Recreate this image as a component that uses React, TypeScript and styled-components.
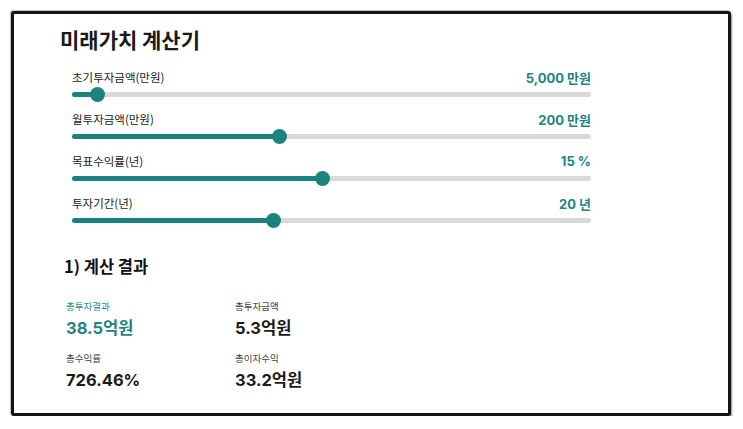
import React from "react";
import styled, { createGlobalStyle } from "styled-components";

const Global = createGlobalStyle`
  html, body { margin: 0; padding: 0; background: #fff; }
  body { font-family: "Inter", "Noto Sans CJK KR", sans-serif; color: #1a1a1a; }
`;

const Frame = styled.div`
  box-sizing: border-box;
  margin: 11px 0 0 11px;
  width: 720px;
  height: 405px;
  border: 3px solid #141414;
  border-radius: 3px;
  box-shadow: 1px 2px 2px rgba(0, 0, 0, 0.45), -1px -1px 1px rgba(0, 0, 0, 0.25);
  padding: 10px 0 0 46px;
  background: #fff;
`;

const Title = styled.h1`
  margin: 0;
  font-family: "Noto Sans CJK KR", sans-serif;
  font-size: 21px;
  font-weight: 700;
  line-height: 30px;
  color: #1a1a1a;
`;

const Sliders = styled.div`
  width: 519px;
  margin: 14px 0 0 12px;
  display: flex;
  flex-direction: column;
  gap: 13px;
`;

const Row = styled.div`
  display: flex;
  flex-direction: column;
  gap: 6px;
`;

const RowHead = styled.div`
  display: flex;
  justify-content: space-between;
  align-items: center;
  height: 18px;
`;

const Label = styled.span`
  font-family: "Noto Sans CJK KR", sans-serif;
  font-size: 11.5px;
  color: #222;
`;

const Value = styled.span`
  font-family: "Inter", "Noto Sans CJK KR", sans-serif;
  font-size: 13px;
  font-weight: 700;
  color: #23837f;
`;

const Track = styled.div`
  position: relative;
  height: 5px;
  border-radius: 3px;
  background: #d9d9d9;
`;

const Fill = styled.div`
  height: 100%;
  border-radius: 3px;
  background: #1b827d;
`;

const Thumb = styled.div`
  position: absolute;
  top: 50%;
  width: 15px;
  height: 15px;
  margin: -7.5px 0 0 -7.5px;
  border-radius: 50%;
  background: #1b827d;
`;

const Section = styled.h2`
  margin: 31px 0 0 4px;
  font-family: "Noto Sans CJK KR", sans-serif;
  font-size: 16.5px;
  font-weight: 700;
  line-height: 24px;
  color: #111;
`;

const Results = styled.div`
  margin: 20px 0 0 6px;
  display: grid;
  grid-template-columns: 169px 170px;
  row-gap: 11px;
`;

const Cell = styled.div`
  display: flex;
  flex-direction: column;
  gap: 3px;
`;

const CellLabel = styled.span<{ $accent?: boolean }>`
  font-family: "Noto Sans CJK KR", sans-serif;
  font-size: 9.5px;
  line-height: 16px;
  color: ${(p) => (p.$accent ? "#2a8f8a" : "#444")};
`;

const CellValue = styled.span<{ $accent?: boolean }>`
  font-family: "Inter", "Noto Sans CJK KR", sans-serif;
  font-size: 16.5px;
  font-weight: 700;
  line-height: 22px;
  color: ${(p) => (p.$accent ? "#23857f" : "#1a1a1a")};
`;

const sliders = [
  { label: "초기투자금액(만원)", value: "5,000 만원", pct: 0.05 },
  { label: "월투자금액(만원)", value: "200 만원", pct: 0.399 },
  { label: "목표수익률(년)", value: "15 %", pct: 0.482 },
  { label: "투자기간(년)", value: "20 년", pct: 0.388 },
];

const results = [
  { label: "총투자결과", value: "38.5억원", accent: true },
  { label: "총투자금액", value: "5.3억원" },
  { label: "총수익률", value: "726.46%" },
  { label: "총이자수익", value: "33.2억원" },
];

export default function App() {
  return (
    <>
      <Global />
      <Frame>
        <Title>미래가치 계산기</Title>
        <Sliders>
          {sliders.map((s) => (
            <Row key={s.label}>
              <RowHead>
                <Label>{s.label}</Label>
                <Value>{s.value}</Value>
              </RowHead>
              <Track>
                <Fill style={{ width: `${s.pct * 100}%` }} />
                <Thumb style={{ left: `${s.pct * 100}%` }} />
              </Track>
            </Row>
          ))}
        </Sliders>
        <Section>1) 계산 결과</Section>
        <Results>
          {results.map((r) => (
            <Cell key={r.label}>
              <CellLabel $accent={r.accent}>{r.label}</CellLabel>
              <CellValue $accent={r.accent}>{r.value}</CellValue>
            </Cell>
          ))}
        </Results>
      </Frame>
    </>
  );
}
